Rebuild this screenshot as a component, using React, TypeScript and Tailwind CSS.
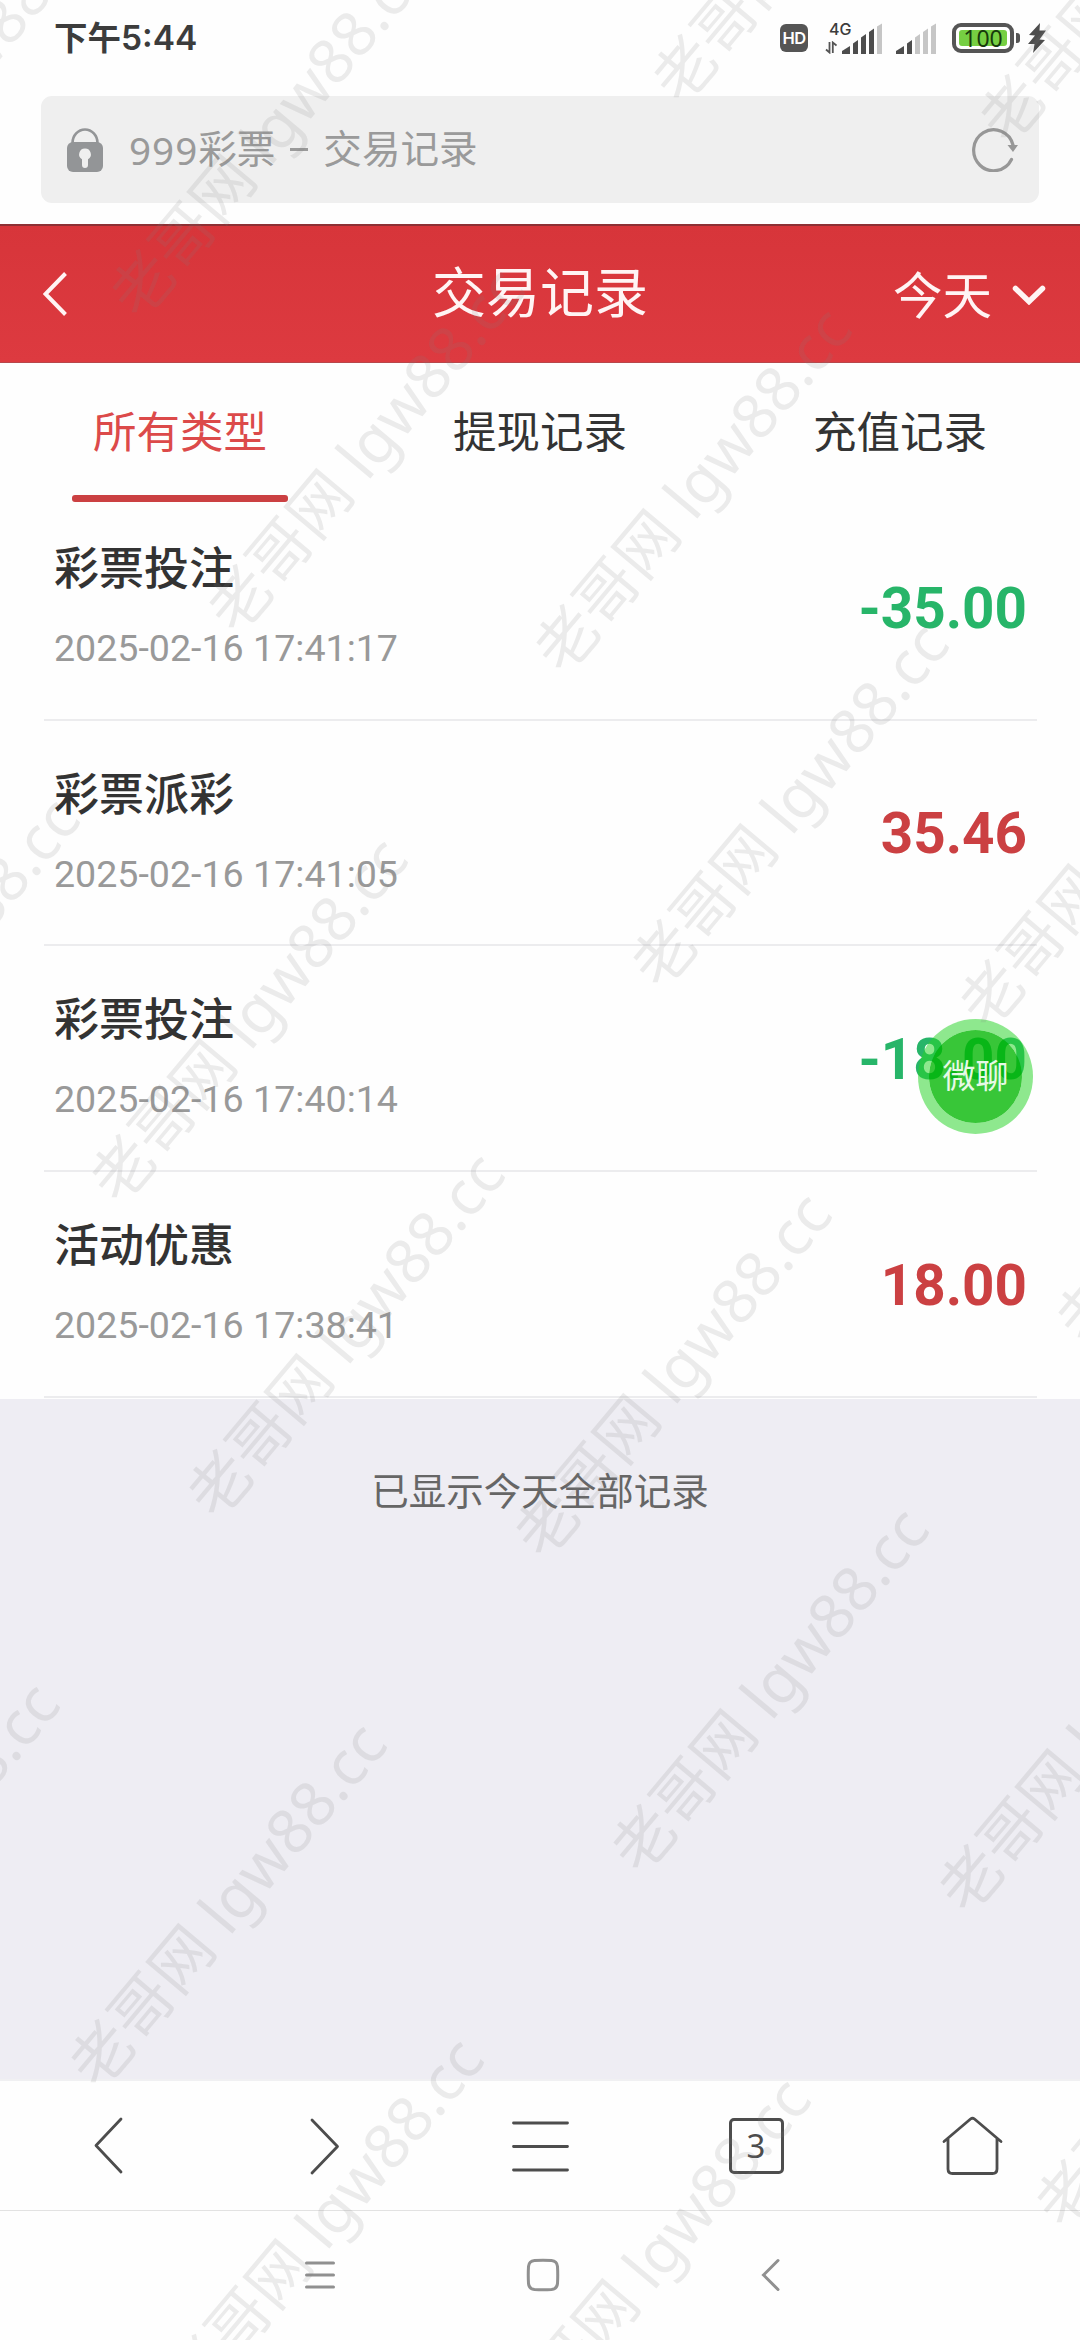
import React from "react";

type RecordItem = {
  id: number;
  title: string;
  time: string;
  amount: string;
};

const RECORDS: RecordItem[] = [
  { id: 1, title: "彩票投注", time: "2025-02-16 17:41:17", amount: "-35.00" },
  { id: 2, title: "彩票派彩", time: "2025-02-16 17:41:05", amount: "35.46" },
  { id: 3, title: "彩票投注", time: "2025-02-16 17:40:14", amount: "-18.00" },
  { id: 4, title: "活动优惠", time: "2025-02-16 17:38:41", amount: "18.00" },
];

const TABS = ["所有类型", "提现记录", "充值记录"];

export default function App() {
  return (
    <div className="relative flex h-[2340px] w-[1080px] flex-col overflow-hidden bg-[#fefefe] font-['Roboto','Noto_Sans_CJK_SC',sans-serif]">
      <StatusBar />
      <AddressBar />
      <PageHeader />
      <Tabs />

      <main className="-mt-[7px] flex flex-1 flex-col bg-[#eeedf3]">
        <ul className="bg-[#fefefe] pb-px pr-[43px] pl-11">
          {RECORDS.map((record) => (
            <RecordRow key={record.id} record={record} />
          ))}
        </ul>
        <p className="mt-[66px] text-center text-[37.5px] leading-[54px] text-[#666]">
          已显示今天全部记录
        </p>
      </main>

      <BrowserToolbar />
      <SystemNav />

      <ChatBubble />
      <Watermark />
    </div>
  );
}

/* STATUS BAR */
function StatusBar() {
  return (
    <div className="flex h-24 shrink-0 items-start justify-between pt-[14px] pr-[34px] pl-[54px]">
      <span className="font-['Inter','Noto_Sans_CJK_SC',sans-serif] text-[33.500px] leading-[48px] font-semibold text-[#3c3c3c]">
        下午5:44
      </span>

      <div className="flex h-12 items-center">
        <span className="flex h-7 w-7 items-center justify-center rounded-[6px] bg-[#555] font-['Inter',sans-serif] text-[16.500px] leading-none font-semibold tracking-[-0.5px] text-white">
          HD
        </span>

        <div className="relative ml-[17px] h-[31px] w-[57px]">
          <span className="absolute -top-[2px] left-1 font-['Inter',sans-serif] text-[16px] leading-4 font-medium text-[#3c3c3c]">
            4G
          </span>
          <svg className="absolute bottom-0 left-0 h-[13px] w-3" viewBox="0 0 12 13" fill="none" stroke="#555" strokeWidth="1.8">
            <path d="M4.500 1v10.500L1 8.500M7.800 12V1.500L11.500 4.500" />
          </svg>
          <SignalBars className="absolute right-0 bottom-0" level={4} />
        </div>
        <SignalBars className="ml-[14px]" level={2} />

        <div className="ml-4 flex items-center">
          <div className="flex h-[30px] w-[62px] items-center justify-center rounded-[9px] border-[4px] border-[#555] bg-white p-[3px]">
            <span className="flex h-4 w-full items-center justify-center rounded-[3px] bg-[#76cf42] font-['Noto_Sans',sans-serif] text-[23px] leading-none text-[#173a0c]">
              100
            </span>
          </div>
          <span className="ml-[2px] h-[10px] w-1 rounded-r-[3px] bg-[#555]" />
        </div>

        <svg className="ml-2 h-[30px] w-[18px]" viewBox="0 0 18 30" fill="#4d4d4d">
          <path d="M12 0 1 12 7 12.500 0 21 6.500 21 5 30 17 17 11.500 16.500 18 7.500 11.500 7.500Z" />
        </svg>
      </div>
    </div>
  );
}

const BARS = [
  "M0 31v-3l8-5v8z",
  "M11 31V20.500l5-3.500v14z",
  "M19 31V14.500l5-3.500v20z",
  "M27 31V9l5-3.500V31z",
  "M35 31V3.500L40 .5V31z",
];

function SignalBars({ level, className }: { level: number; className: string }) {
  return (
    <svg className={`h-[31px] w-10 ${className}`} viewBox="0 0 40 31">
      {BARS.map((d, i) => (
        <path key={d} d={d} fill={i < level ? "#4d4d4d" : "#c6c6c6"} />
      ))}
    </svg>
  );
}

/* ADDRESS BAR */
function AddressBar() {
  return (
    <div className="mx-[41px] mb-[21px] flex h-[107px] shrink-0 items-center rounded-[11px] bg-[#efefef] pr-[21px] pl-[26px] text-[38.600px] leading-[56px] text-[#9a9a9a]">
      <svg className="h-11 w-9" viewBox="0 0 36 44">
        <path d="M5.500 17v-2a12.500 13.500 0 0 1 25 0v2" fill="none" stroke="#939597" strokeWidth="2.600" />
        <rect y="14" width="36" height="30" rx="6" fill="#939597" />
        <path d="M18 20.500a5.800 5.800 0 0 0-3 10.800V37a3 3 0 0 0 6 0v-5.700a5.800 5.800 0 0 0-3-10.800Z" fill="#efefef" />
      </svg>
      <span className="ml-[26px] font-['Noto_Sans',sans-serif] tracking-[1px]">999</span>
      <span className="mt-px">彩票</span>
      <span className="mr-[15px] ml-[15px] h-[3px] w-[18px] bg-[#9a9a9a]" />
      <span className="mt-px flex-1">交易记录</span>
      <svg className="h-11 w-[46px]" viewBox="0 0 46 44">
        <path d="M39.500 31.500A20 20.500 0 1 1 41 17" fill="none" stroke="#979797" strokeWidth="3.200" strokeLinecap="round" />
        <path d="M35.500 17h10.500l-5 7z" fill="#979797" />
      </svg>
    </div>
  );
}

/* PAGE HEADER */
function PageHeader() {
  return (
    <header className="grid h-[139px] shrink-0 grid-cols-[1fr_auto_1fr] items-center border-t-2 border-t-[#8d3034] border-b border-b-[#b8474b] bg-linear-to-b from-[#d7353a] to-[#dd3a40] px-[34px] text-[#fff4f4]">
      <svg className="ml-[9px] h-11 w-6" viewBox="0 0 24 44" fill="none" stroke="currentColor" strokeWidth="4">
        <path d="M22.500 1.500 2.500 22l20 20.500" />
      </svg>
      <h1 className="mt-px text-center text-[54px] leading-[72px] whitespace-nowrap">交易记录</h1>
      <div className="flex items-center justify-end text-[49.500px] leading-[64px] whitespace-nowrap">
        <span className="mt-[6px]">今天</span>
        <svg className="mt-[2px] ml-5 h-5 w-[34px]" viewBox="0 0 34 20" fill="none" stroke="currentColor" strokeWidth="5.500" strokeLinecap="round">
          <path d="m3.500 3.500 13.500 13 13.500-13" />
        </svg>
      </div>
    </header>
  );
}

function Tabs() {
  return (
    <nav className="z-10 grid h-[139px] shrink-0 grid-cols-3">
      {TABS.map((tab, i) => (
        <div
          key={tab}
          className={`flex flex-col items-center justify-between pt-10 text-[43.500px] leading-[62px] ${
            i === 0 ? "text-[#dc4a4a]" : "text-[#333]"
          }`}
        >
          {tab}
          {i === 0 && <span className="h-[7px] w-[216px] rounded-[3px] bg-[#cb4042]" />}
        </div>
      ))}
    </nav>
  );
}

function RecordRow({ record }: { record: RecordItem }) {
  const isExpense = record.amount.startsWith("-");

  return (
    <li className="flex h-[225.700px] items-center justify-between border-b-2 border-[#ececee] pr-[10px] pl-[10px]">
      <div className="-mt-[2px] flex flex-col gap-9">
        <span className="text-[45px] leading-[48px] font-medium text-[#333]">{record.title}</span>
        <span className="text-[37.600px] leading-9 text-[#999]">{record.time}</span>
      </div>
      <span
        className={`mt-1 text-[56.600px] leading-none font-bold ${
          isExpense ? "text-[#27b569]" : "text-[#cb4042]"
        }`}
      >
        {record.amount}
      </span>
    </li>
  );
}

/* BOTTOM BARS */
function BrowserToolbar() {
  return (
    <div className="grid h-[132px] shrink-0 grid-cols-5 place-items-center border-t-2 border-b border-t-[#f0f0f2] border-b-[#e2e2e2] text-[#4d4d4d]">
      <ToolIcon d="M43 4 18 30.500 43 57" />
      <ToolIcon d="M18 5l25.500 26.500L18 58" />
      <ToolIcon d="M3.500 8h54M3.500 31.500h54M3.500 55h54" />
      <span className="mt-px flex h-14 w-[55px] items-center justify-center rounded-[5px] border-[3px] border-[#4d4d4d] pb-[2px] font-['Noto_Sans',sans-serif] text-[33px] leading-none">
        3
      </span>
      <ToolIcon d="M2 26.500 28.500 4q2-1.500 4 0L59 26.500M6 24v30q0 4.500 4.500 4.500h40q4.500 0 4.500-4.500V24" />
    </div>
  );
}

function ToolIcon({ d }: { d: string }) {
  return (
    <svg className="h-[62px] w-[61px]" viewBox="0 0 61 62" fill="none" stroke="currentColor" strokeWidth="2.800" strokeLinecap="round" strokeLinejoin="round">
      <path d={d} />
    </svg>
  );
}

function SystemNav() {
  return (
    <div className="flex h-[129px] shrink-0 items-center pb-[2px] pl-[304px] text-[#909090]">
      <svg className="h-[34px] w-8" viewBox="0 0 32 34" fill="none" stroke="currentColor" strokeWidth="3" strokeLinecap="round">
        <path d="M2.500 5h27M2.500 17h27M2.500 29h27" />
      </svg>
      <svg className="ml-[190px] h-[34px] w-[34px]" viewBox="0 0 34 34" fill="none" stroke="currentColor" strokeWidth="3">
        <path d="M8.500 2.500Q17 2 25.500 2.500 31 3 31.500 8.500 32 17 31.500 25.500 31 31 25.500 31.500 17 32 8.500 31.500 3 31 2.500 25.500 2 17 2.500 8.500 3 3 8.500 2.500Z" />
      </svg>
      <svg className="ml-[201px] h-[34px] w-[19px]" viewBox="0 0 19 34" fill="none" stroke="currentColor" strokeWidth="3" strokeLinecap="round">
        <path d="M17 2.500 2.500 17 17 31.500" />
      </svg>
    </div>
  );
}

/* FLOATING CHAT BUTTON */
function ChatBubble() {
  return (
    <button className="absolute top-[1019px] left-[918px] z-20 flex h-[115px] w-[115px] items-center justify-center rounded-full border-[11px] border-[rgba(41,211,41,0.53)] bg-[rgba(0,182,0,0.78)] bg-clip-padding text-[33px] leading-none text-[#e6f9e6]">
      微聊
    </button>
  );
}

/* Marks sit in pairs on a skewed grid. */
const MARKS = [-2, -1, 0, 1, 2, 3, 4, 5, 6].flatMap((a) =>
  [-2, -1, 0, 1, 2, 3, 4].flatMap((b) => {
    const x = 98 + a * 424.3 - b * 444.8;
    const y = 287 + a * 354.9 + b * 530.1;
    return [
      { x, y },
      { x: x + 97, y: y + 315 },
    ];
  })
).filter(({ x, y }) => x > -380 && x < 1060 && y > -40 && y < 2700);

function Watermark() {
  return (
    <div className="pointer-events-none absolute inset-0 z-30 overflow-hidden" aria-hidden>
      {MARKS.map(({ x, y }) => (
        <span
          key={`${x}-${y}`}
          className="absolute origin-top-left rotate-[-50deg] font-['Noto_Sans','Noto_Sans_CJK_SC',sans-serif] text-[62px] leading-[62px] whitespace-nowrap text-[rgba(128,128,128,0.15)]"
          style={{ left: x, top: y }}
        >
          老哥网 lgw88.cc
        </span>
      ))}
    </div>
  );
}
